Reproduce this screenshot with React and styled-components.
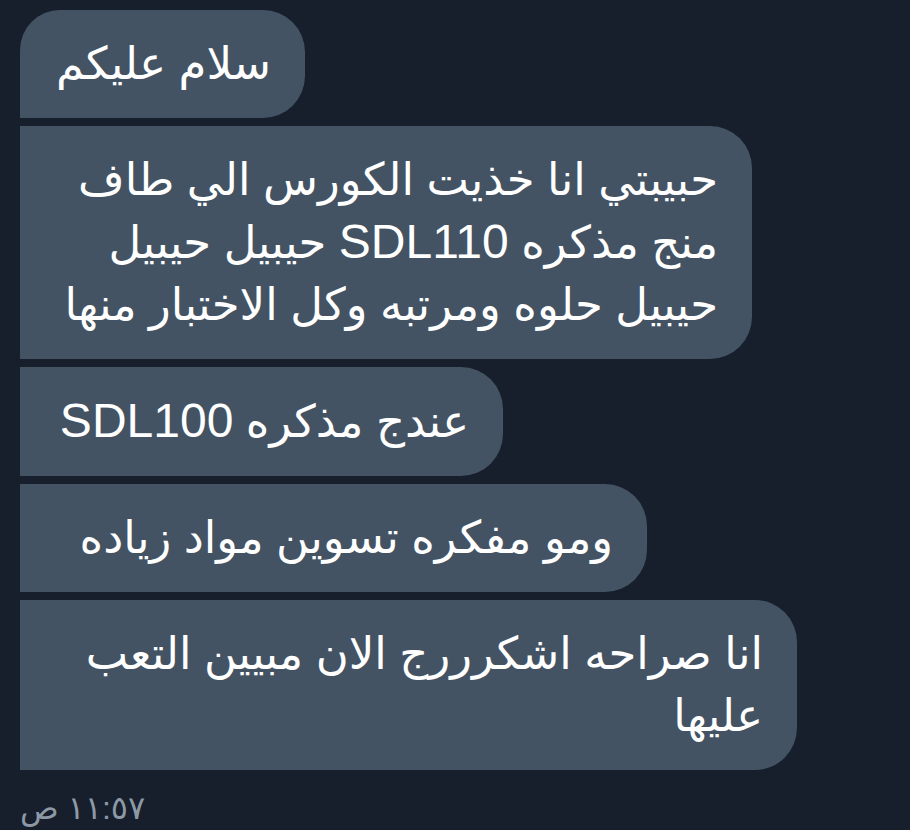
import React from 'react';
import styled, { createGlobalStyle } from 'styled-components';

const GlobalStyle = createGlobalStyle`
    html, body {
        margin: 0;
        padding: 0;
        background-color: #161f2b;
    }
`;

const Thread = styled.div`
    width: 910px;
    height: 830px;
    overflow: hidden;
    box-sizing: border-box;
    padding: 10px 0 0 20px;
    display: flex;
    flex-direction: column;
    align-items: flex-start;
    gap: 8px;
    font-family: "Liberation Sans", "DejaVu Sans", sans-serif;
`;

const Bubble = styled.div`
    direction: rtl;
    text-align: right;
    box-sizing: border-box;
    width: ${(p) => p.$width}px;
    padding: 23px 34px 23px 20px;
    background-color: #435363;
    color: #ffffff;
    font-size: 45px;
    line-height: 62px;
    white-space: nowrap;
    border-radius: ${(p) => (p.$first ? '40px' : '0')} 42px 42px 0;
`;

const Line = styled.div`
    display: block;
`;

const Latin = styled.span`
    font-size: 48px;
`;

const Time = styled.div`
    direction: rtl;
    margin-top: 12px;
    color: #8d99a6;
    font-size: 32px;
    line-height: 36px;
`;

const messages = [
    { width: 285, lines: [['سلام عليكم']], first: true },
    {
        width: 732,
        lines: [
            ['حبيبتي انا خذيت الكورس الي طاف'],
            ['منج مذكره ', 'SDL110', ' حيبيل حيبيل'],
            ['حيبيل حلوه ومرتبه وكل الاختبار منها'],
        ],
    },
    { width: 483, lines: [['عندج مذكره ', 'SDL100']] },
    { width: 627, lines: [['ومو مفكره تسوين مواد زياده']] },
    { width: 777, lines: [['انا صراحه اشكرررج الان مبيين التعب'], ['عليها']] },
];

const App = () => {
    return (
        <>
            <GlobalStyle />
            <Thread>
                {messages.map((m, i) => (
                    <Bubble key={i} $width={m.width} $first={m.first}>
                        {m.lines.map((parts, j) => (
                            <Line key={j}>
                                {parts.map((t, k) =>
                                    /[A-Z]/.test(t) ? <Latin key={k}>{t}</Latin> : t
                                )}
                            </Line>
                        ))}
                    </Bubble>
                ))}
                <Time>١١:٥٧ ص</Time>
            </Thread>
        </>
    );
};

export default App;
